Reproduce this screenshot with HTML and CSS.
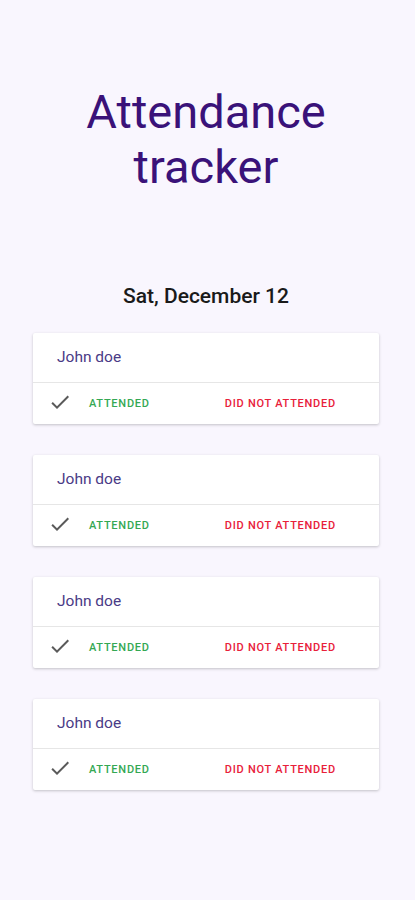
FILE: index.html
```html
<!DOCTYPE html>
<html lang="en">
<head>
  <meta charset="UTF-8">
  <meta name="viewport" content="width=device-width, initial-scale=1.0">
  <title>Attendance tracker</title>
  <link rel="stylesheet" href="styles.css">
</head>
<body>
  <div class="app">
    <h1 class="title">Attendance tracker</h1>

    <h2 class="date">Sat, December 12</h2>

    <div class="list">
      <div class="card">
        <div class="card-name">John doe</div>
        <div class="card-actions">
          <svg class="check" viewBox="0 0 24 24" width="24" height="24"><path d="M9 16.2L4.8 12l-1.4 1.4L9 19 21 7l-1.4-1.4L9 16.2z"/></svg>
          <button class="btn btn-yes">Attended</button>
          <button class="btn btn-no">Did not attended</button>
        </div>
      </div>

      <div class="card">
        <div class="card-name">John doe</div>
        <div class="card-actions">
          <svg class="check" viewBox="0 0 24 24" width="24" height="24"><path d="M9 16.2L4.8 12l-1.4 1.4L9 19 21 7l-1.4-1.4L9 16.2z"/></svg>
          <button class="btn btn-yes">Attended</button>
          <button class="btn btn-no">Did not attended</button>
        </div>
      </div>

      <div class="card">
        <div class="card-name">John doe</div>
        <div class="card-actions">
          <svg class="check" viewBox="0 0 24 24" width="24" height="24"><path d="M9 16.2L4.8 12l-1.4 1.4L9 19 21 7l-1.4-1.4L9 16.2z"/></svg>
          <button class="btn btn-yes">Attended</button>
          <button class="btn btn-no">Did not attended</button>
        </div>
      </div>

      <div class="card">
        <div class="card-name">John doe</div>
        <div class="card-actions">
          <svg class="check" viewBox="0 0 24 24" width="24" height="24"><path d="M9 16.2L4.8 12l-1.4 1.4L9 19 21 7l-1.4-1.4L9 16.2z"/></svg>
          <button class="btn btn-yes">Attended</button>
          <button class="btn btn-no">Did not attended</button>
        </div>
      </div>
    </div>
  </div>
</body>
</html>
```

FILE: styles.css
```css
html, body {
  margin: 0;
  padding: 0;
  background-color: #f9f6fe;
}

body {
  font-family: Roboto, "Noto Sans", Arial, sans-serif;
  min-height: 900px;
}

.app {
  padding: 84px 36px 40px 33px;
}

.title {
  max-width: 290px;
  margin: 0 auto;
  font-size: 47px;
  font-weight: 400;
  line-height: 55px;
  color: #3a1279;
  text-align: center;
}

.date {
  margin: 90px 0 25px 0;
  font-size: 21px;
  font-weight: 500;
  line-height: 24px;
  color: #1a1a1a;
  text-align: center;
}

.list {
  display: flex;
  flex-direction: column;
  gap: 31px;
}

.card {
  background-color: #fff;
  border-radius: 2px;
  box-shadow: 0 1px 3px rgba(0,0,0,0.22);
}

.card-name {
  height: 47px;
  display: flex;
  align-items: center;
  padding-left: 24px;
  padding-bottom: 2px;
  font-size: 15.5px;
  color: #4a3b86;
  border-bottom: 1px solid #e6e6e6;
}

.card-actions {
  height: 41px;
  display: flex;
  align-items: center;
  padding-left: 15px;
}

.check {
  fill: #5a5a5a;
  margin-top: -4px;
}

.btn {
  background: none;
  border: none;
  padding: 0;
  font-family: inherit;
  font-size: 11px;
  font-weight: 500;
  letter-spacing: 0.75px;
  text-transform: uppercase;
  cursor: pointer;
}

.btn-yes {
  color: #34a853;
  margin-left: 17px;
}

.btn-no {
  color: #e8203a;
  margin-left: 75px;
}
```
